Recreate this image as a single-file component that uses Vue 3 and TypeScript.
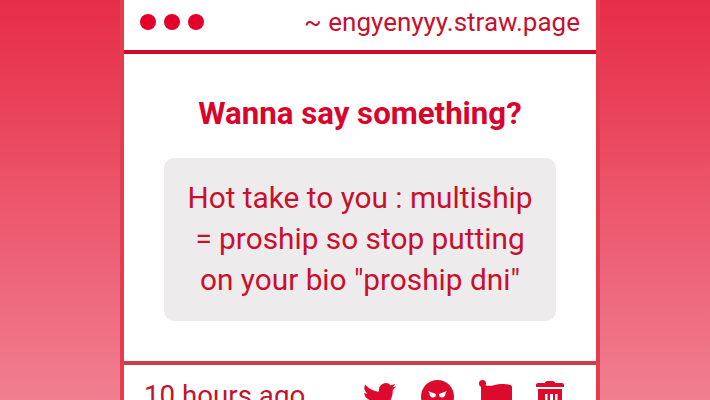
<template>
  <div class="page">
    <div class="card">
      <header class="topbar">
        <div class="dots">
          <span v-for="n in 3" :key="n" class="dot"></span>
        </div>
        <span class="host">~ engyenyyy.straw.page</span>
      </header>

      <main class="body">
        <h1 class="title">Wanna say something?</h1>
        <div class="message">Hot take to you : multiship = proship so stop putting on your bio "proship dni"</div>
      </main>

      <footer class="bottombar">
        <span class="time">10 hours ago</span>
        <div class="actions">
          <!-- twitter -->
          <svg class="icon tw" width="32" height="32" viewBox="0.5 1.5 23 23">
            <path d="M23.5 4.6c-.9.4-1.8.6-2.8.8 1-.6 1.8-1.5 2.1-2.7-.9.6-2 1-3.1 1.2A4.9 4.9 0 0 0 11.4 8.4C7.400 8.200 3.800 6.300 1.400 3.300c-1.300 2.200-.6 5.100 1.500 6.500-.8 0-1.500-.2-2.200-.6 0 2.400 1.700 4.400 3.900 4.900-.7.2-1.500.2-2.200.1.600 2 2.400 3.400 4.600 3.400-2.100 1.600-4.700 2.300-7.300 2 2.200 1.400 4.800 2.200 7.500 2.200 9.100 0 14.300-7.700 14-14.600 1-.7 1.800-1.500 2.300-2.600z" />
          </svg>
          <!-- angry face -->
          <svg class="icon" width="33" height="33" viewBox="0 0 33 33">
            <circle cx="16.500" cy="16.500" r="16.500" />
            <path class="cut" d="M7 11l8 3c0 2.500-1 3.500-3 3.500-2.500 0-3.700-2-3.500-4.500zM26 11l-8 3c0 2.500 1 3.500 3 3.500 2.500 0 3.700-2 3.500-4.500zM10 26c1.500-2.300 4-3.500 6.500-3.500S21.500 23.700 23 26l-1.500 1c-1.200-1.500-3.200-2.300-5-2.300s-3.800.8-5 2.300z" />
          </svg>
          <!-- flag -->
          <svg class="icon" width="33" height="34" viewBox="0 0 33 34">
            <circle cx="3.500" cy="3.500" r="3.500" />
            <path d="M2 4c3.500 1.500 7.500 2.200 12 1.600 6-1.600 11.500-1.900 16.500-.9 1.500.3 2.500 1 2.500 2.200V30c-6-1.400-11.500-1-16.500.2-4 1-8 .6-11.500-1V34H2z" />
          </svg>
          <!-- trash -->
          <svg class="icon tr" width="28" height="33" viewBox="0 0 28 33">
            <path fill-rule="evenodd" d="M9 2c0-1.200 1-2 2-2h6c1 0 2 .8 2 2h7c1.200 0 2 .9 2 2.200V6H0V4.200C0 2.900.8 2 2 2zM2 8h24v22c0 1.700-1.300 3-3 3H5c-1.700 0-3-1.300-3-3zm7 5v16h2.500V13zm5 0v16h3V13zm5 0v16h2.500V13z" />
          </svg>
        </div>
      </footer>
    </div>
  </div>
</template>

<script setup lang="ts">
</script>

<style>
html, body {
  margin: 0;
  overflow: hidden;
}
</style>

<style scoped>
.page {
  height: 400px;
  overflow: hidden;
  display: flex;
  justify-content: center;
  padding-left: 10px;
  background: linear-gradient(180deg, #e62d47 0%, #f07f90 100%);
  font-family: Roboto, "Liberation Sans", sans-serif;
  color: #c8102e;
}

.card {
  width: 472px;
  height: 440px;
  flex: none;
  background: #fff;
  border-left: 4px solid #e53c4e;
  border-right: 4px solid #e53c4e;
}

.topbar {
  height: 44px;
  padding: 0 16px 6px;
  display: flex;
  align-items: center;
  justify-content: space-between;
  border-bottom: 4px solid #d2082a;
}

.dots {
  display: flex;
  gap: 8px;
}

.dot {
  width: 16px;
  height: 16px;
  border-radius: 50%;
  background: #e4002b;
}

.host {
  font-size: 26px;
  line-height: 44px;
}

.body {
  height: 307px;
  padding-top: 40px;
  box-sizing: border-box;
}

.title {
  margin: 0;
  font-size: 31.2px;
  line-height: 40px;
  font-weight: 700;
  text-align: center;
  color: #d9042b;
}

.message {
  margin: 24px 40px 0;
  padding: 19px 20px 21px;
  background: #edebec;
  border-radius: 10px;
  font-size: 29.8px;
  line-height: 41px;
  text-align: center;
}

.bottombar {
  display: flex;
  align-items: flex-start;
  justify-content: space-between;
  padding: 15px 32px 0 20px;
  border-top: 4px solid #c8404e;
}

.time {
  margin-top: -1px;
  font-size: 27.7px;
  line-height: 34px;
}

.actions {
  display: flex;
  gap: 25px;
  align-items: flex-start;
}

.icon {
  display: block;
  fill: #dc0a2d;
}

.cut {
  fill: #fff;
}

.tw {
  margin-top: 2px;
}

.tr {
  margin-top: 1px;
  margin-left: -1px;
}
</style>
